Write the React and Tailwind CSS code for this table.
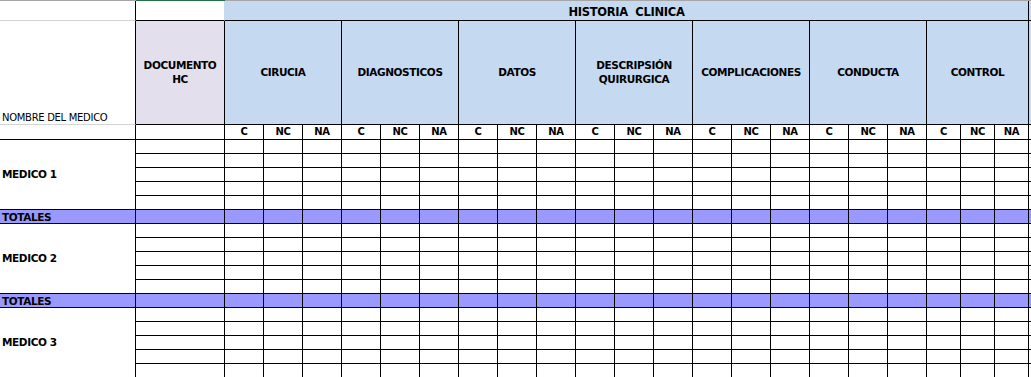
const groups = [
  ["CIRUCIA"],
  ["DIAGNOSTICOS"],
  ["DATOS"],
  ["DESCRIPSIÓN", "QUIRURGICA"],
  ["COMPLICACIONES"],
  ["CONDUCTA"],
  ["CONTROL"],
];

const subs = ["C", "NC", "NA"];
const sections = ["MEDICO 1", "MEDICO 2", "MEDICO 3"];
const blank = Array.from({ length: 21 }, (_, i) => i);

const cell = "border-r border-b border-black";

const DataRow = ({ fill }) => (
  <>
    <div className={`${cell} ${fill}`} />
    {blank.map((i) => (
      <div key={i} className={`${cell} ${fill}`} />
    ))}
    <div className={`border-b border-black ${fill}`} />
  </>
);

const App = () => {
  return (
    <div className="h-[377px] w-[1031px] overflow-hidden bg-white font-['DejaVu_Sans',sans-serif] text-black">
      <div className="flex h-px">
        <div className="w-[136px] bg-[#a6a6a6]" />
        <div className="w-[89px] bg-[#217346]" />
        <div className="flex-1 bg-[#a6a6a6]" />
      </div>

      <div className="grid grid-cols-[136px_89px_repeat(18,39px)_34px_34px_34px_2px] grid-rows-[20px_104px_15px] auto-rows-[14px]">
        {/* row 1 */}
        <div className="border-r border-b border-r-black border-b-[#d4d4d4]" />
        <div className="border-r border-b border-r-[#c5d9f1] border-b-black" />
        <div
          className={`${cell} col-span-21 flex items-end justify-center bg-[#c5d9f1] pb-[2px] text-[11.5px] leading-none font-bold tracking-[-0.3px]`}
        >
          HISTORIA&nbsp;&nbsp;CLINICA
        </div>
        <div className="border-b border-black bg-[#c5d9f1]" />

        {/* row 2 */}
        <div className="flex items-end border-r border-b border-r-black border-b-[#d4d4d4] pb-[1px] pl-[2px] text-[10px] leading-none tracking-[-0.3px]">
          NOMBRE DEL MEDICO
        </div>
        <div
          className={`${cell} flex flex-col items-center justify-center bg-[#e4dfec] pb-[1px] text-[10.5px] leading-[14px] font-bold tracking-[-0.4px]`}
        >
          <span>DOCUMENTO</span>
          <span>HC</span>
        </div>
        {groups.map((lines) => (
          <div
            key={lines[0]}
            className={`${cell} col-span-3 flex flex-col items-center justify-center bg-[#c5d9f1] pb-[1px] text-[10.5px] leading-[14px] font-bold tracking-[-0.4px]`}
          >
            {lines.map((line) => (
              <span key={line}>{line}</span>
            ))}
          </div>
        ))}
        <div className="border-b border-black bg-[#c5d9f1]" />

        {/* row 3 */}
        <div className={cell} />
        <div className={cell} />
        {groups.map((g) =>
          subs.map((s) => (
            <div
              key={g[0] + s}
              className={`${cell} flex items-center justify-center text-[10px] leading-none font-bold tracking-[-0.3px]`}
            >
              {s}
            </div>
          )),
        )}
        <div className="border-b border-black" />

        {sections.map((name, idx) => (
          <div key={name} className="contents">
            <div
              className={`${cell} row-span-5 flex items-center pl-[2px] text-[10.5px] leading-none font-bold tracking-[-0.4px]`}
            >
              {name}
            </div>
            {[0, 1, 2, 3, 4].map((r) => (
              <DataRow key={r} fill="bg-white" />
            ))}
            {idx < sections.length - 1 ? (
              <>
                <div
                  className={`${cell} flex items-end bg-[#9999ff] pb-[1px] pl-[2px] text-[10.5px] leading-none font-bold tracking-[-0.4px]`}
                >
                  TOTALES
                </div>
                <DataRow fill="bg-[#9999ff]" />
              </>
            ) : null}
          </div>
        ))}
      </div>
    </div>
  );
};

export default App;
